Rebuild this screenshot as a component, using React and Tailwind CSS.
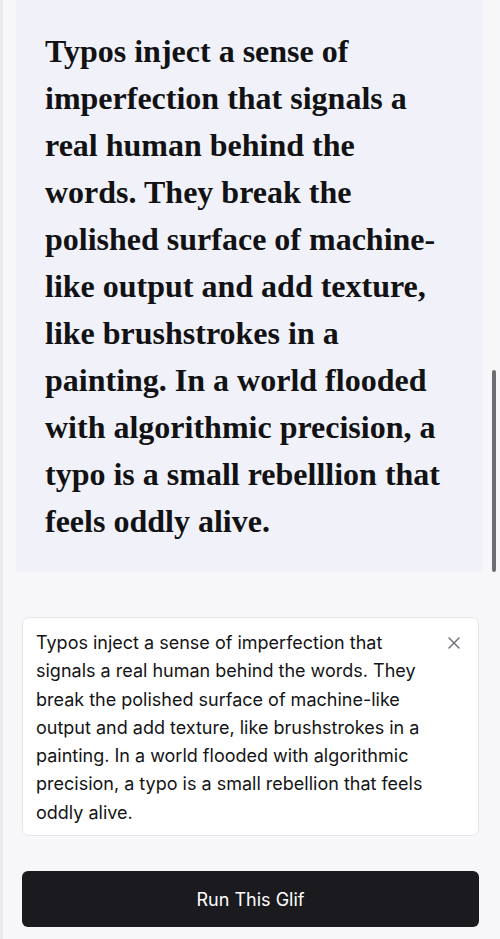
import React from "react";

const lines = [
  "Typos inject a sense of",
  "imperfection that signals a",
  "real human behind the",
  "words. They break the",
  "polished surface of machine-",
  "like output and add texture,",
  "like brushstrokes in a",
  "painting. In a world flooded",
  "with algorithmic precision, a",
  "typo is a small rebelllion that",
  "feels oddly alive.",
];

export default function App() {
  return (
    <div className="w-[500px] h-[939px] overflow-hidden bg-[#f7f7f9] flex relative">
      <div className="w-[3px] bg-[#ebebee] shrink-0" />
      <div className="flex-1 flex flex-col">
        <div className="ml-[13px] mr-[17px] bg-[#f1f2f9] pl-[29px] pr-[8px] pt-[28px] pb-[27px]">
          <p
            className="text-[#121214] text-[32px] leading-[47px] font-bold"
            style={{ fontFamily: '"Liberation Serif", serif' }}
          >
            {lines.map((l, i) => (
              <React.Fragment key={i}>
                {l}
                {i < lines.length - 1 && <br />}
              </React.Fragment>
            ))}
          </p>
        </div>
        <div className="ml-[19px] mr-[21px] mt-[45px] bg-white border border-[#e6e6ea] rounded-[7px] pl-[13px] pr-[18px] pt-[11px] pb-[8px] flex gap-[10px]">
          <p
            className="flex-1 text-[#141416] text-[18px] leading-[28.3px]"
            style={{ fontFamily: 'Inter, "Noto Sans", sans-serif' }}
          >
            Typos inject a sense of imperfection that signals a real human behind the words. They break the polished surface of machine-like output and add texture, like brushstrokes in a painting. In a world flooded with algorithmic precision, a typo is a small rebellion that feels oddly alive.
          </p>
          <svg width="12" height="12" viewBox="0 0 12 12" className="mt-[8px] shrink-0">
            <path d="M1 1 L11 11 M11 1 L1 11" stroke="#6b6b72" strokeWidth="1.4" strokeLinecap="round" />
          </svg>
        </div>
        <button
          className="ml-[19px] mr-[21px] mt-[35px] h-[56px] bg-[#1b1b1f] rounded-[6px] text-white text-[18px] flex items-center justify-center"
          style={{ fontFamily: 'Inter, "Noto Sans", sans-serif' }}
        >
          Run This Glif
        </button>
      </div>
      <div className="absolute right-[4px] top-[370px] w-[4px] h-[202px] rounded-full bg-[#6e6e72]" />
    </div>
  );
}
